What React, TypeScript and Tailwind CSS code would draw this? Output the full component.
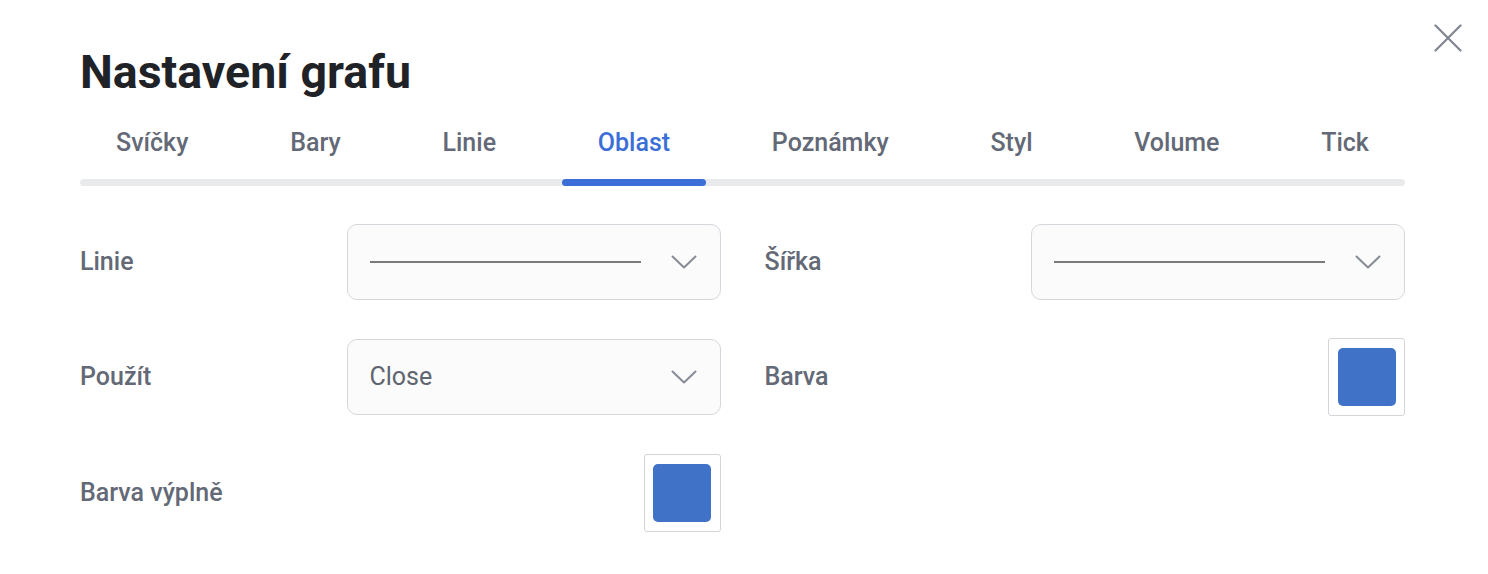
const tabs = ['Svíčky', 'Bary', 'Linie', 'Oblast', 'Poznámky', 'Styl', 'Volume', 'Tick'];

function Chevron() {
  return (
    <svg width="26" height="14" viewBox="0 0 26 14" fill="none" className="shrink-0">
      <polyline points="1.5,1.5 13,12.5 24.5,1.5" stroke="#868b96" strokeWidth="2" strokeLinecap="round" strokeLinejoin="round" />
    </svg>
  );
}

function Select({ children }: { children: React.ReactNode }) {
  return (
    <div className="w-[374px] h-[76px] rounded-[10px] border border-[#d5d7dc] bg-[#fbfbfb] pl-[22px] pr-[23px] flex items-center justify-between">
      {children}
      <Chevron />
    </div>
  );
}

function LinePreview() {
  return <div className="w-[271px] h-[2px] bg-[#7a7a7a]" />;
}

function Swatch({ color }: { color: string }) {
  return (
    <div className="w-[77px] h-[78px] rounded-[3px] border border-[#d3d5d9] bg-white flex items-center justify-center">
      <div className="w-[58px] h-[58px] rounded-[5px]" style={{ backgroundColor: color }} />
    </div>
  );
}

function Row({ label, children }: { label: string; children?: React.ReactNode }) {
  return (
    <div className="flex items-center justify-between">
      <span className="text-[25px] font-medium text-[#636976]">{label}</span>
      {children}
    </div>
  );
}

export default function App() {
  const active = 'Oblast';
  return (
    <div className="relative w-[1488px] h-[574px] bg-white pl-[80px] pr-[83px] pt-[44px] font-['Roboto',sans-serif]">
      <button className="absolute top-[24px] left-[1434px]">
        <svg width="28" height="28" viewBox="0 0 28 28" fill="none">
          <path d="M1.5 1.5 L26.5 26.5 M26.5 1.5 L1.5 26.5" stroke="#80858f" strokeWidth="2.2" strokeLinecap="round" />
        </svg>
      </button>

      <h1 className="text-[46.5px] leading-[56px] font-bold text-[#1f2226]">Nastavení grafu</h1>

      {/* Tabs */}
      <div className="relative mt-[27px] flex justify-between">
        <div className="absolute inset-x-0 bottom-0 h-[7px] rounded-full bg-[#e9eaec]" />
        {tabs.map((t) => (
          <div key={t} className="relative flex flex-col items-center px-[36px]">
            <span className={`text-[25px] leading-[32px] font-medium ${t === active ? 'text-[#3b6fd7]' : 'text-[#636976]'}`}>{t}</span>
            <div className={`mt-[20px] h-[7px] w-[calc(100%+72px)] -mx-[36px] rounded-full ${t === active ? 'bg-[#3b6fd7]' : 'bg-transparent'}`} />
          </div>
        ))}
      </div>

      {/* Form */}
      <div className="mt-[38px] grid grid-cols-2 gap-x-[44px] gap-y-[38px]">
        <Row label="Linie">
          <Select>
            <LinePreview />
          </Select>
        </Row>
        <Row label="Šířka">
          <Select>
            <LinePreview />
          </Select>
        </Row>
        <Row label="Použít">
          <Select>
            <span className="text-[25px] text-[#5f6470]">Close</span>
          </Select>
        </Row>
        <Row label="Barva">
          <Swatch color="#4072c8" />
        </Row>
        <Row label="Barva výplně">
          <Swatch color="#4072c8" />
        </Row>
      </div>
    </div>
  );
}
